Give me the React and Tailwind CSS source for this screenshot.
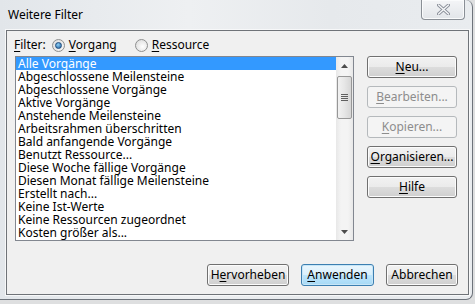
import React from "react";

const items = [
  "Alle Vorgänge",
  "Abgeschlossene Meilensteine",
  "Abgeschlossene Vorgänge",
  "Aktive Vorgänge",
  "Anstehende Meilensteine",
  "Arbeitsrahmen überschritten",
  "Bald anfangende Vorgänge",
  "Benutzt Ressource...",
  "Diese Woche fällige Vorgänge",
  "Diesen Monat fällige Meilensteine",
  "Erstellt nach...",
  "Keine Ist-Werte",
  "Keine Ressourcen zugeordnet",
  "Kosten größer als...",
];

function U({ children }) {
  return <span className="underline underline-offset-2">{children}</span>;
}

function Btn({ children, disabled, primary, className = "" }) {
  let cls =
    "h-[22px] flex items-center justify-center rounded-[3px] border text-[12px] ";
  if (disabled) cls += "border-[#b5b9bc] bg-[#f4f4f4] text-[#8d8d8d] ";
  else if (primary)
    cls +=
      "border-[#3c7fb1] bg-[linear-gradient(#eaf6fd_0%,#d9f0fc_50%,#bee6fd_50%,#a7d9f5_100%)] text-black shadow-[inset_0_0_0_1px_#c7e6f7] ";
  else
    cls +=
      "border-[#707070] bg-[linear-gradient(#f2f2f2_0%,#ebebeb_50%,#dddddd_50%,#cfcfcf_100%)] text-black shadow-[inset_0_0_0_1px_#fcfcfc] ";
  return <div className={cls + className}>{children}</div>;
}

function Radio({ checked }) {
  return (
    <div className="w-[13px] h-[13px] rounded-full border border-[#8e8f8f] bg-[radial-gradient(circle_at_60%_60%,#ffffff,#d6d6d6)] flex items-center justify-center">
      {checked && (
        <div className="w-[7px] h-[7px] rounded-full bg-[radial-gradient(circle_at_40%_35%,#8fd0f6,#1c5b9a)] border border-[#1e4c7e]" />
      )}
    </div>
  );
}

export default function App() {
  return (
    <div
      className="w-[475px] h-[304px] bg-[#dedfe0] overflow-hidden text-[12px] text-black"
      style={{ fontFamily: '"Noto Sans", "Open Sans", sans-serif' }}
    >
      <div className="w-[473px] h-[300px] border-r border-b border-[#6d737b] rounded-tr-[7px] rounded-br-[7px] bg-[linear-gradient(90deg,#e2e6ea,#eef0f2_40%,#e6e9ec_70%,#e9ecef)] flex flex-col">
        <div className="h-[30px] flex items-start shrink-0">
          <div className="pl-[8px] pt-[6px] leading-[18px] text-[12px]">Weitere Filter</div>
          <div className="ml-auto mr-[7px] w-[44px] h-[20px] border border-t-0 border-[#8a8f96] rounded-b-[4px] bg-[linear-gradient(#f4f5f7,#e2e5e9)] flex items-center justify-center shadow-[inset_0_0_0_1px_#fafbfc]">
            <svg width="13" height="11" viewBox="0 0 13 11">
              <path d="M1.5 1 L11.5 10 M11.5 1 L1.5 10" stroke="#8a8f99" strokeWidth="3.2" strokeLinecap="round" />
              <path d="M1.5 1 L11.5 10 M11.5 1 L1.5 10" stroke="#f6f7f9" strokeWidth="1.4" strokeLinecap="round" />
            </svg>
          </div>
        </div>
        <div className="ml-[6px] mr-[3px] h-[265px] shrink-0 border border-[#6f7378] shadow-[0_0_0_1px_#f7f8f9] bg-[#f0f0f0] flex flex-col">
          <div className="h-[25px] flex items-center pl-[7px] pt-[3px] gap-[5px]">
            <span><U>F</U>ilter:</span>
            <div className="flex items-center gap-[4px] ml-[1px]">
              <Radio checked />
              <span><U>V</U>organg</span>
            </div>
            <div className="flex items-center gap-[4px] ml-[13px]">
              <Radio />
              <span><U>R</U>essource</span>
            </div>
          </div>
          <div className="flex pl-[8px]">
            <div className="w-[339px] h-[185px] border border-[#828790] bg-white flex">
              <div className="flex-1 flex flex-col">
                {items.map((t, i) => (
                  <div
                    key={t}
                    className={
                      "h-[13px] leading-[13px] pl-[2px] whitespace-nowrap " +
                      (i === 0 ? "bg-[#3399ff] text-white" : "")
                    }
                  >
                    {t}
                  </div>
                ))}
              </div>
              <div className="w-[17px] bg-[linear-gradient(90deg,#e8e8e8,#f4f4f4_30%,#f4f4f4_70%,#e8e8e8)] flex flex-col items-center">
                <div className="h-[17px] w-full flex items-center justify-center">
                  <svg width="7" height="4" viewBox="0 0 7 4"><path d="M0 4 L3.5 0 L7 4 Z" fill="#4d4d4d" /></svg>
                </div>
                <div className="mt-[2px] w-[15px] h-[43px] rounded-[2px] border border-[#979797] bg-[linear-gradient(90deg,#f2f2f2,#e6e6e6_50%,#d6d6d6)] flex items-center justify-center">
                  <svg width="7" height="7" viewBox="0 0 7 7">
                    <path d="M0 0.5 H7 M0 2.5 H7 M0 4.5 H7 M0 6.5 H7" stroke="#5f5f5f" strokeWidth="1" />
                  </svg>
                </div>
                <div className="mt-auto h-[17px] w-full flex items-center justify-center">
                  <svg width="7" height="4" viewBox="0 0 7 4"><path d="M0 0 L3.5 4 L7 0 Z" fill="#4d4d4d" /></svg>
                </div>
              </div>
            </div>
            <div className="ml-[13px] w-[90px] flex flex-col gap-[8px]">
              <Btn><span><U>N</U>eu...</span></Btn>
              <Btn disabled><span><U>B</U>earbeiten...</span></Btn>
              <Btn disabled><span><U>K</U>opieren...</span></Btn>
              <Btn><span><U>O</U>rganisieren...</span></Btn>
              <Btn><span><U>H</U>ilfe</span></Btn>
            </div>
          </div>
          <div className="mt-auto mb-[8px] mr-[10px] flex justify-end gap-[12px]">
            <Btn className="w-[82px]"><span>H<U>e</U>rvorheben</span></Btn>
            <Btn primary className="w-[73px]"><span><U>A</U>nwenden</span></Btn>
            <Btn className="w-[72px]"><span>Abbrechen</span></Btn>
          </div>
        </div>
      </div>
    </div>
  );
}
